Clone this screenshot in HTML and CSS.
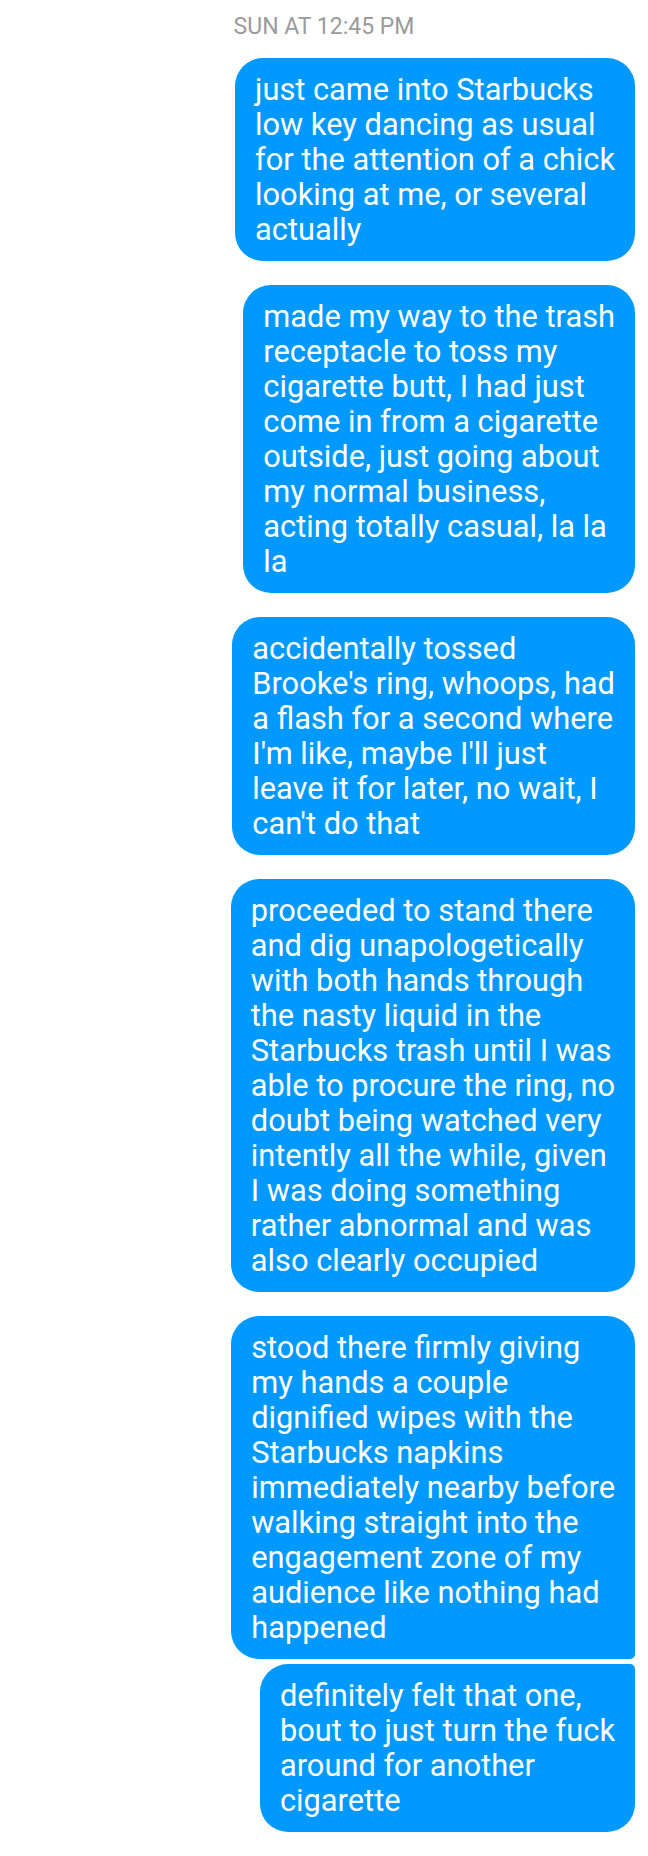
FILE: index.html
```html
<!DOCTYPE html>
<html lang="en">
<head>
<meta charset="utf-8">
<title>Messages</title>
<link rel="stylesheet" href="styles.css">
</head>
<body>
<div class="chat">
  <div class="stamp">SUN AT 12:45 PM</div>
  <div class="thread">
    <div class="bubble">just came into Starbucks<br>low key dancing as usual<br>for the attention of a chick<br>looking at me, or several<br>actually</div>
    <div class="bubble">made my way to the trash<br>receptacle to toss my<br>cigarette butt, I had just<br>come in from a cigarette<br>outside, just going about<br>my normal business,<br>acting totally casual, la la<br>la</div>
    <div class="bubble">accidentally tossed<br>Brooke's ring, whoops, had<br>a flash for a second where<br>I'm like, maybe I'll just<br>leave it for later, no wait, I<br>can't do that</div>
    <div class="bubble">proceeded to stand there<br>and dig unapologetically<br>with both hands through<br>the nasty liquid in the<br>Starbucks trash until I was<br>able to procure the ring, no<br>doubt being watched very<br>intently all the while, given<br>I was doing something<br>rather abnormal and was<br>also clearly occupied</div>
    <div class="group">
      <div class="bubble first">stood there firmly giving<br>my hands a couple<br>dignified wipes with the<br>Starbucks napkins<br>immediately nearby before<br>walking straight into the<br>engagement zone of my<br>audience like nothing had<br>happened</div>
      <div class="bubble last">definitely felt that one,<br>bout to just turn the fuck<br>around for another<br>cigarette</div>
    </div>
  </div>
</div>
</body>
</html>
```

FILE: styles.css
```css
* { box-sizing: border-box; }
html, body {
  margin: 0;
  padding: 0;
  background: #ffffff;
}
body {
  width: 648px;
  font-family: Roboto, "Noto Sans", "Liberation Sans", sans-serif;
}
.chat {
  display: flex;
  flex-direction: column;
  padding-top: 13px;
}
.stamp {
  text-align: center;
  font-size: 23px;
  line-height: 28px;
  color: #9b9b9b;
  margin-bottom: 17px;
}
.thread {
  display: flex;
  flex-direction: column;
  align-items: flex-end;
  gap: 24px;
  padding-right: 13px;
}
.group {
  display: flex;
  flex-direction: column;
  align-items: flex-end;
  gap: 5px;
}
.bubble {
  background: #0099ff;
  color: #ffffff;
  font-size: 30.8px;
  line-height: 35px;
  padding: 14px 20px;
  border-radius: 28px;
  white-space: nowrap;
}
.bubble.first { border-bottom-right-radius: 5px; }
.bubble.last { border-top-right-radius: 5px; }
```
